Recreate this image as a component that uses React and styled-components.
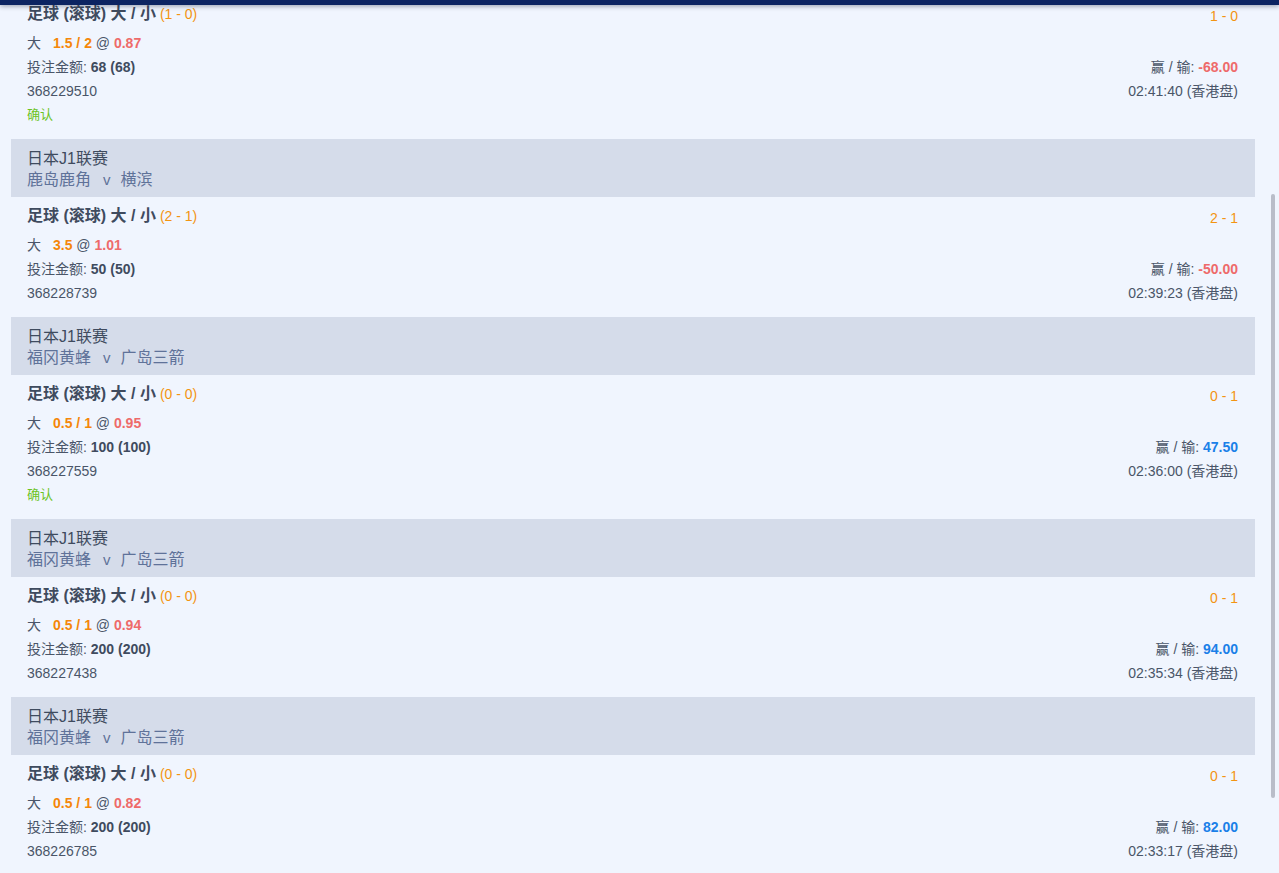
import styled, {createGlobalStyle} from "styled-components";

const GlobalStyle = createGlobalStyle`
  html, body {
    margin: 0;
    padding: 0;
    background: #f0f5fe;
    font-family: "Liberation Sans", "Noto Sans CJK SC", sans-serif;
    color: #4a5568;
  }
  #root {
    min-height: 100vh;
  }
`;

const bets = [
    {
        league: "日本J1联赛", home: "", away: "", showHeader: false,
        live: "(1 - 0)", final: "1 - 0",
        side: "大", line: "1.5 / 2", odds: "0.87",
        stake: "68 (68)", result: "-68.00", win: false,
        id: "368229510", time: "02:41:40", confirmed: true,
    },
    {
        league: "日本J1联赛", home: "鹿岛鹿角", away: "横滨", showHeader: true,
        live: "(2 - 1)", final: "2 - 1",
        side: "大", line: "3.5", odds: "1.01",
        stake: "50 (50)", result: "-50.00", win: false,
        id: "368228739", time: "02:39:23", confirmed: false,
    },
    {
        league: "日本J1联赛", home: "福冈黄蜂", away: "广岛三箭", showHeader: true,
        live: "(0 - 0)", final: "0 - 1",
        side: "大", line: "0.5 / 1", odds: "0.95",
        stake: "100 (100)", result: "47.50", win: true,
        id: "368227559", time: "02:36:00", confirmed: true,
    },
    {
        league: "日本J1联赛", home: "福冈黄蜂", away: "广岛三箭", showHeader: true,
        live: "(0 - 0)", final: "0 - 1",
        side: "大", line: "0.5 / 1", odds: "0.94",
        stake: "200 (200)", result: "94.00", win: true,
        id: "368227438", time: "02:35:34", confirmed: false,
    },
    {
        league: "日本J1联赛", home: "福冈黄蜂", away: "广岛三箭", showHeader: true,
        live: "(0 - 0)", final: "0 - 1",
        side: "大", line: "0.5 / 1", odds: "0.82",
        stake: "200 (200)", result: "82.00", win: true,
        id: "368226785", time: "02:33:17", confirmed: false,
    },
];

const TopBar = styled.div`
  position: fixed;
  top: 0;
  left: 0;
  right: 0;
  height: 5px;
  background: #0c2462;
  box-shadow: 0 1px 5px rgba(20, 30, 60, 0.45);
  z-index: 10;
`;

const ScrollThumb = styled.div`
  position: fixed;
  top: 194px;
  right: 4px;
  width: 4px;
  height: 604px;
  border-radius: 2px;
  background: #b9bdc9;
`;

const Page = styled.div`
  height: 100vh;
  overflow: hidden;
  padding: 0 24px 0 11px;
`;

const List = styled.div`
  margin-top: -5px;
  display: flex;
  flex-direction: column;
`;

const MatchHeader = styled.div`
  background: #d5dcea;
  padding: 9px 16px 7px 16px;
  height: 58px;
  box-sizing: border-box;
  font-size: 16px;
  line-height: 21px;
`;

const League = styled.div`
  color: #3f4b5e;
`;

const Teams = styled.div`
  color: #5f7299;
`;

const Versus = styled.span`
  margin: 0 10px 0 12px;
  font-size: 15px;
`;

const Card = styled.div`
  padding: 7px 17px 12px 16px;
`;

const TitleRow = styled.div`
  display: flex;
  justify-content: space-between;
  align-items: flex-start;
  height: 24px;
  line-height: 24px;
  margin-bottom: 5px;
`;

const Title = styled.span`
  font-size: 16px;
  font-weight: bold;
  color: #3f4b5e;
`;

const Score = styled.span`
  font-size: 14px;
  color: #f39412;
  margin-left: ${p => (p.$inline ? "4px" : "0")};
  padding-top: ${p => (p.$inline ? "0" : "2px")};
`;

const Line = styled.div`
  display: flex;
  justify-content: space-between;
  font-size: 14px;
  line-height: 24px;
  color: #4a5568;
`;

const Strong = styled.b`
  color: ${p => p.$color || "#3f4b5e"};
`;

const Side = styled.span`
  margin-right: 12px;
`;

const Confirmed = styled.div`
  font-size: 13px;
  line-height: 24px;
  color: #6cc31f;
`;

function BetCard({bet}) {
    return (
        <Card>
            <TitleRow>
                <span>
                    <Title>足球 (滚球) 大 / 小</Title>
                    <Score $inline>{bet.live}</Score>
                </span>
                <Score>{bet.final}</Score>
            </TitleRow>
            <Line>
                <span>
                    <Side>{bet.side}</Side>
                    <Strong $color="#f5870a">{bet.line}</Strong> @ <Strong $color="#ee6a6a">{bet.odds}</Strong>
                </span>
            </Line>
            <Line>
                <span>投注金额: <Strong>{bet.stake}</Strong></span>
                <span>
                    赢 / 输: <Strong $color={bet.win ? "#1a80e8" : "#ee6a6a"}>{bet.result}</Strong>
                </span>
            </Line>
            <Line>
                <span>{bet.id}</span>
                <span>{bet.time} (香港盘)</span>
            </Line>
            {bet.confirmed && <Confirmed>确认</Confirmed>}
        </Card>
    );
}

export default function App() {
    return (<>
        <GlobalStyle />
        <TopBar />
        <Page>
            <List>
                {bets.map(bet => (
                    <div key={bet.id}>
                        {bet.showHeader && (
                            <MatchHeader>
                                <League>{bet.league}</League>
                                <Teams>{bet.home}<Versus>v</Versus>{bet.away}</Teams>
                            </MatchHeader>
                        )}
                        <BetCard bet={bet} />
                    </div>
                ))}
            </List>
        </Page>
        <ScrollThumb />
    </>);
}
